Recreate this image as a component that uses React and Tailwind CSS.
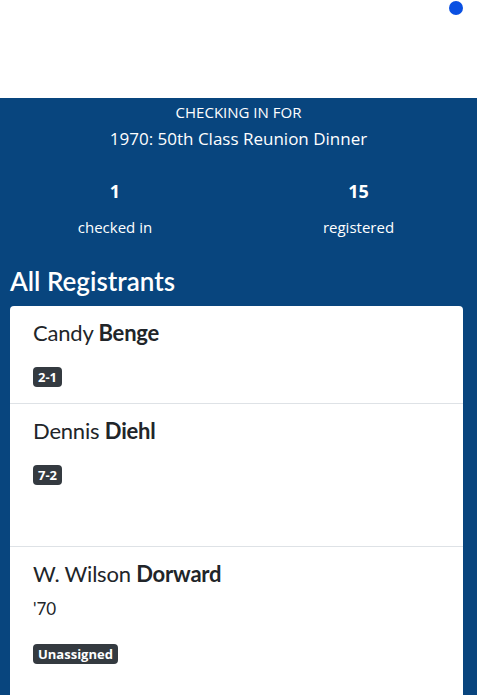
import React from 'react';

const registrants = [
  { first: 'Candy', last: 'Benge', badge: '2-1', extra: 'pb-[15px]' },
  { first: 'Dennis', last: 'Diehl', badge: '7-2', extra: 'pb-[60px]' },
  { first: 'W. Wilson', last: 'Dorward', year: "'70", badge: 'Unassigned', extra: 'pb-[40px]' },
];

const App = () => {
  return (
    <div className="min-h-screen bg-[#08457e] font-['Open_Sans',sans-serif]">
      <div className="relative h-[98px] bg-white">
        <span className="absolute right-[14px] top-[1px] h-[14px] w-[14px] rounded-full bg-[#0a50e2]" />
      </div>

      <div className="pt-[4px] text-center text-white">
        <p className="text-[15px] leading-[20px]">CHECKING IN FOR</p>
        <p className="mt-[5px] text-[17px] leading-[24px]">1970: 50th Class Reunion Dinner</p>
      </div>

      <div className="mt-[28px] flex text-center text-white">
        <div className="w-[230px]">
          <p className="text-[18px] font-bold leading-[24px]">1</p>
          <p className="mt-[13px] text-[15px] leading-[22px]">checked in</p>
        </div>
        <div className="ml-[10px] flex-1">
          <p className="text-[18px] font-bold leading-[24px]">15</p>
          <p className="mt-[13px] text-[15px] leading-[22px]">registered</p>
        </div>
      </div>

      <h2 className="mt-[27px] px-[10px] font-['Lato',sans-serif] text-[26px] font-semibold leading-[32px] text-white">
        All Registrants
      </h2>

      <div className="ml-[10px] mr-[14px] mt-[9px] rounded-[4px] bg-white">
        {registrants.map((r, i) => (
          <div
            key={r.last}
            className={`px-[23px] pt-[15px] ${r.extra} ${i > 0 ? 'border-t border-[#dee2e6]' : ''}`}
          >
            <p className="font-['Lato',sans-serif] text-[22px] leading-[24px] tracking-[-0.2px] text-[#212529]">
              {r.first} <span className="font-bold">{r.last}</span>
            </p>
            {r.year ? (
              <p className="mt-[11px] font-['Lato',sans-serif] text-[17px] leading-[24px] text-[#212529]">{r.year}</p>
            ) : null}
            <span
              className={`${r.year ? 'mt-[23px]' : 'mt-[22px]'} inline-block rounded-[4px] bg-[#343a40] px-[5px] text-[13px] font-bold leading-[20px] text-white`}
            >
              {r.badge}
            </span>
          </div>
        ))}
      </div>
    </div>
  );
};

export default App;
